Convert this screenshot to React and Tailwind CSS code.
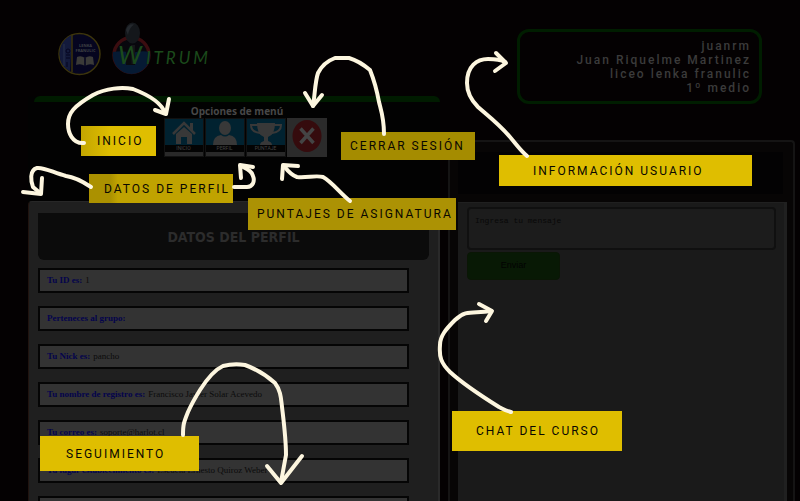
const labelFont = "font-['Roboto','Open_Sans',sans-serif]";

const rows = [
  ["Tu ID es:", "1"],
  ["Perteneces al grupo:", ""],
  ["Tu Nick es:", "pancho"],
  ["Tu nombre de registro es:", "Francisco Javier Solar Acevedo"],
  ["Tu correo es:", "soporte@harlot.cl"],
  ["Tu lugar establecimiento es:", "Escuela Ernesto Quiroz Weber"],
  ["", ""],
];

const callouts = [
  { text: "INICIO", cls: "left-[81px] top-[126px] w-[75px] h-[30px] pl-4 bg-linear-to-r from-[#c3a600] to-[#dfbe00] to-40%" },
  { text: "DATOS DE PERFIL", cls: "left-[89px] top-[174px] w-[144px] h-[29px] pl-[15px] bg-linear-to-r from-[#ab9100] from-15% to-[#c0a300] to-20%" },
  { text: "CERRAR SESIÓN", cls: "left-[341px] top-[132px] w-[134px] h-7 pl-[9px] bg-[#a58c00]" },
  { text: "PUNTAJES DE ASIGNATURA", cls: "left-[248px] top-[198px] w-[208px] h-8 pl-[9px] bg-[#ac9204]" },
  { text: "INFORMACIÓN USUARIO", cls: "left-[499px] top-[155px] w-[253px] h-[31px] pl-[34px] bg-[#dfbe00]" },
  { text: "CHAT DEL CURSO", cls: "left-[452px] top-[411px] w-[170px] h-10 pl-6 bg-[#dfbe00]" },
  { text: "SEGUIMIENTO", cls: "left-10 top-[436px] w-[159px] h-[35px] pl-[26px] bg-[#dfbe00]" },
];

const arrows = [
  "M84 143 C72 144 68 132 68 124 C68 113 74 106 93 95 C106 88 122 87 133 89 C146 94 161 101 165 113",
  "M155 110 L166 114 L169 99",
  "M91 187 C82 181 74 177 66 176 C54 173 44 167 37 168 C29 170 31 182 33 187 L40 193",
  "M23 192 L41 194 L42 178",
  "M234 187 H247 C253 187 255 181 253 176 C252 171 247 169 241 166",
  "M241 178 L240 165 L253 167",
  "M384 134 C384 118 381 110 379 102 C377 91 374 80 370 70 C364 65 356 60 349 58 H335 C327 61 321 67 318 73 C315 82 315 94 313 106",
  "M305 93 L313 106 L322 95",
  "M350 201 C340 193 332 182 323 177 C316 175 307 178 297 177 C291 175 287 170 284 166",
  "M282 179 L283 165 L298 166",
  "M527 156 C520 150 516 144 510 137 C499 124 487 115 478 107 C469 98 467 90 467 83 C467 66 477 59 488 59 C494 59 500 59 505 62",
  "M496 53 L506 63 L495 71",
  "M511 412 C506 411 503 409 499 407 C483 397 462 383 450 372 C441 363 439 357 440 345 C440 336 446 329 455 320 C466 309 474 314 491 311",
  "M479 304 L492 311 L486 321",
  "M183 435 C183 424 184 422 188 412 C192 403 195 398 200 390 C207 379 214 370 223 366 C231 364 238 364 245 365 C256 369 267 376 275 383 C281 391 281 399 282 407 C284 424 286 439 286 455 L281 482",
  "M267 466 L281 483 L302 456",
];

function Tile({ label, children }) {
  return (
    <button type="button" aria-label={label} className="flex h-[39px] w-10 flex-col border border-[#111] bg-[#012230]">
      <svg viewBox="0 0 38 26" className="h-[26px] w-full fill-[#383838] stroke-[#383838]">{children}</svg>
      <span className={`h-[7px] w-full bg-[#030303] text-center text-[5px] leading-[7px] text-[#444] ${labelFont}`}>{label}</span>
      <span className="w-full flex-1 bg-[#292929]" />
    </button>
  );
}

function Logos() {
  return (
    <svg width="160" height="56" viewBox="56 22 160 56" role="img" aria-label="Lenka Franulic, Witrum">
      <circle cx="79.500" cy="54" r="20.500" fill="#05051f" stroke="#3d350c" strokeWidth="1.500" />
      <path d="M72 35 A20 20 0 0 0 59.500 54 A20 20 0 0 0 70 71.500 Z" fill="#131a3b" />
      <path d="M72 35 V72" stroke="#3d350c" strokeWidth="1.500" />
      <path d="M64 44 V66" stroke="#29304a" strokeWidth="1" />
      <circle cx="68" cy="51" r="2" fill="none" stroke="#05051f" />
      <path d="M66 55 H70 M66 58 H70 M67 62 V67" stroke="#05051f" />
      <g fill="#3f4145" fontFamily="Open Sans, sans-serif" fontSize="4" fontWeight="700" textAnchor="middle">
        <text x="85.500" y="47">LENKA</text>
        <text x="85.500" y="52">FRANULIC</text>
      </g>
      <path d="M77 57 Q81 55 85 58 Q89 55 93 57 L94 65 Q89 63 85 66 Q81 63 76 65 Z" fill="#3a3a38" />
      <path d="M85 58 V66" stroke="#05051f" strokeWidth="1.500" />
      <circle cx="131.500" cy="55" r="17.500" fill="#08070d" stroke="#3b0d10" strokeWidth="3.500" />
      <path d="M113 52 Q122 50 131.500 53 Q142 50 150 52 A19 19 0 0 1 131.500 74 A19 19 0 0 1 113 52 Z" fill="#061a33" />
      <rect x="126" y="52" width="9" height="13" fill="#0a0a0e" />
      <path d="M131 45 H135 L134.500 64 H131.500 Z" fill="#151719" />
      <ellipse cx="132.500" cy="33" rx="7.500" ry="10.500" fill="#14171b" />
      <path d="M126 30 Q128 23.500 134 24.500 Q129 28 128 35 Z" fill="#24282d" />
      <g fill="#1b4a1b" fontFamily="Lato, sans-serif" fontStyle="italic">
        <text x="118" y="64" fontSize="25">W</text>
        <text x="146" y="64" fontSize="17" letterSpacing="3">ITRUM</text>
      </g>
    </svg>
  );
}

export default function App() {
  return (
    <main className="relative grid h-screen grid-cols-[minmax(0,412fr)_minmax(0,347fr)] gap-2 overflow-hidden bg-[#040102] pl-7 pr-[5px]">
      <div className="flex min-w-0 flex-col bg-[linear-gradient(#040102_96px,#020202_97px)]">
        <header className="h-24 pl-7 pt-[22px]"><Logos /></header>
        <nav aria-label="Opciones de menú" className="ml-1.5 flex h-[105px] flex-col items-center">
          <div className="h-1.5 w-full rounded-t-md bg-[#001b00]" />
          <h2 className="mt-0.5 text-[10px] font-bold leading-[14px] text-[#484848] font-['Open_Sans','Noto_Sans',sans-serif]">Opciones de menú</h2>
          <div className="flex gap-px pl-4">
            <Tile label="INICIO">
              <path d="M8 15 L19 4 L30 15" fill="none" strokeWidth="2.500" />
              <path d="M25 4 H28 V12 L25 9 Z" stroke="none" />
              <path d="M11 15 L19 8 L27 15 V25 H22 V18 H16 V25 H11 Z" stroke="none" />
            </Tile>
            <Tile label="PERFIL">
              <ellipse cx="19" cy="9" rx="6" ry="7" stroke="none" />
              <path d="M7 26 Q7 17 15 16 Q19 19 23 16 Q31 17 31 26 Z" stroke="none" />
            </Tile>
            <Tile label="PUNTAJE">
              <path d="M10 4 H28 Q28 16 21 18 V22 Q25 23 25 26 H13 Q13 23 17 22 V18 Q10 16 10 4 Z" stroke="none" />
              <path d="M11 6 H4 Q4 13 13 14 M27 6 H34 Q34 13 25 14" fill="none" strokeWidth="2" />
            </Tile>
            <button type="button" aria-label="Cerrar sesión" className="h-[39px] w-10 bg-[#2b2b2b]">
              <svg viewBox="0 0 40 39" className="size-full">
                <ellipse cx="20" cy="18" rx="14.500" ry="16" fill="#350b0d" />
                <path d="M13.500 10.500 L26.500 25 M26.500 10.500 L13.500 25" stroke="#444" strokeWidth="3.500" />
              </svg>
            </button>
          </div>
        </nav>
        <section className="flex flex-1 flex-col rounded-t-sm border-l border-r-2 border-t border-l-[#20130f] border-r-[#2a2a2a] border-t-[#272727] bg-[#1f1f1f] px-[9px] pt-[11px]">
          <h1 className="flex h-[47px] shrink-0 items-center justify-center rounded-b-md bg-[#0b0b0b] text-sm font-bold text-[#2c2c2c] font-['DejaVu_Sans_Condensed','DejaVu_Sans',sans-serif]">DATOS DEL PERFIL</h1>
          <dl className="mr-5 mt-2 flex flex-col gap-[13px] text-[9px] font-['Liberation_Serif',serif]">
            {rows.map(([name, value], i) => (
              <div key={i} className="flex h-[25px] shrink-0 items-center gap-[3px] border-2 border-[#050505] bg-[#333] px-[7px]">
                <dt className="font-bold text-[#04044c]">{name}</dt>
                <dd className="text-[#0b0b0b]">{value}</dd>
              </div>
            ))}
          </dl>
        </section>
      </div>

      <div className="flex min-w-0 flex-col">
        <div className={`ml-[69px] mr-[33px] mt-[29px] flex h-[75px] flex-col justify-center rounded-xl border-3 border-[#001d00] pr-2 text-right text-xs font-medium leading-[14px] tracking-[2px] text-[#3b3b3b] ${labelFont}`}>
          <p>juanrm</p>
          <p>Juan Riquelme Martinez</p>
          <p>liceo lenka franulic</p>
          <p>1º medio</p>
        </div>
        <section aria-label="Chat del curso" className="mt-9 flex flex-1 flex-col rounded-t-sm border-x-2 border-t-2 border-[#151414] bg-[#070505] pl-2 pr-1.5 pt-2.5">
          <div className="mr-1 h-[42px] bg-[#030203]" />
          <form className="mt-2 flex flex-1 flex-col items-start border-r-3 border-t border-[#202020] bg-[#1a1a1a] pl-[9px] pr-2 pt-1">
            <textarea aria-label="Mensaje" placeholder="Ingresa tu mensaje" className="block h-[43px] w-full resize-none rounded-sm border-2 border-[#101010] bg-[#1c1c1c] px-1.5 py-1.5 text-[8px] text-[#080808] placeholder:text-[#080808] font-['Liberation_Mono',monospace]" />
            <button type="button" className="mt-0.5 h-7 w-[93px] rounded-sm border border-[#0a1605] bg-[#081905] text-[9px] text-[#020202] font-['Liberation_Sans',sans-serif]">Enviar</button>
          </form>
        </section>
      </div>

      {callouts.map(({ text, cls }) => (
        <div key={text} className={`absolute flex items-center whitespace-nowrap text-xs tracking-[2px] text-[#0a0800] ${labelFont} ${cls}`}>{text}</div>
      ))}
      <svg aria-hidden="true" width="800" height="501" viewBox="0 0 800 501" className="pointer-events-none absolute left-0 top-0 fill-none stroke-[#fdf6df]" strokeWidth="4" strokeLinecap="round" strokeLinejoin="round">
        {arrows.map((d) => <path key={d} d={d} />)}
      </svg>
    </main>
  );
}
